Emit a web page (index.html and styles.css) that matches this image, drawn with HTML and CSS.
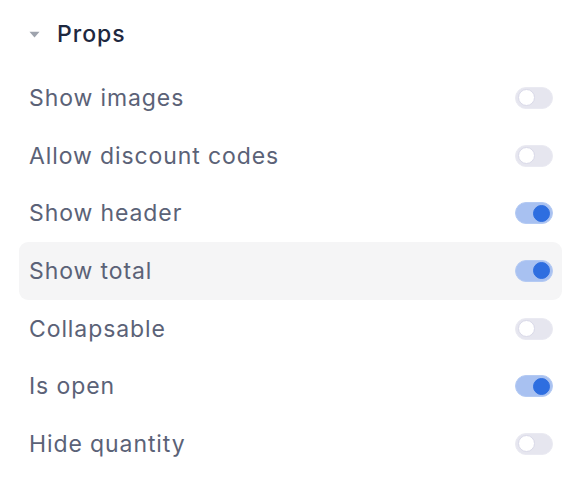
FILE: index.html
```html
<!DOCTYPE html>
<html>
<head>
<meta charset="utf-8">
<link rel="stylesheet" href="styles.css">
</head>
<body>
<div class="panel">
  <div class="header">
    <svg class="caret" width="11" height="7" viewBox="0 0 11 7"><path d="M0.5 0.8 H10.5 L5.5 6.5 Z" fill="#9ea3ad"/></svg>
    <span class="title">Props</span>
  </div>
  <div class="list">
    <div class="row"><span class="label">Show images</span><span class="toggle"><span class="knob"></span></span></div>
    <div class="row"><span class="label">Allow discount codes</span><span class="toggle"><span class="knob"></span></span></div>
    <div class="row"><span class="label">Show header</span><span class="toggle on"><span class="knob"></span></span></div>
    <div class="row hover"><span class="label">Show total</span><span class="toggle on"><span class="knob"></span></span></div>
    <div class="row"><span class="label">Collapsable</span><span class="toggle"><span class="knob"></span></span></div>
    <div class="row"><span class="label">Is open</span><span class="toggle on"><span class="knob"></span></span></div>
    <div class="row"><span class="label">Hide quantity</span><span class="toggle"><span class="knob"></span></span></div>
  </div>
</div>
</body>
</html>
```
FILE: styles.css
```css
html, body {
  margin: 0;
  padding: 0;
  background: #ffffff;
}
body {
  font-family: Inter, "Noto Sans", sans-serif;
}
.panel {
  padding: 0 18px 0 19px;
}
.header {
  display: flex;
  align-items: center;
  height: 48px;
  padding-top: 10px;
  padding-left: 10px;
  gap: 17px;
}
.caret {
  display: block;
  margin-top: 1px;
}
.title {
  font-size: 23px;
  font-weight: 500;
  color: #1e2840;
  letter-spacing: 1px;
}
.list {
  display: flex;
  flex-direction: column;
  margin-top: 11px;
}
.row {
  display: flex;
  align-items: center;
  justify-content: space-between;
  height: 57.7px;
  padding: 0 9px 0 10px;
  border-radius: 9px;
}
.row.hover {
  background: #f5f5f6;
}
.label {
  font-size: 23px;
  color: #5b6277;
  letter-spacing: 0.9px;
}
.toggle {
  box-sizing: border-box;
  width: 38px;
  height: 22px;
  border-radius: 11px;
  background: #e6e6ef;
  border: 1px solid #eaeaf2;
  display: flex;
  align-items: center;
  padding: 0 2px;
}
.knob {
  box-sizing: border-box;
  width: 17px;
  height: 17px;
  border-radius: 50%;
  background: #ffffff;
  border: 1.5px solid #d9d9e8;
}
.toggle.on {
  background: #a8c1f1;
  border-color: #b4caf3;
  justify-content: flex-end;
}
.toggle.on .knob {
  background: #2e6ee0;
  border-color: #2e6ee0;
}
```
